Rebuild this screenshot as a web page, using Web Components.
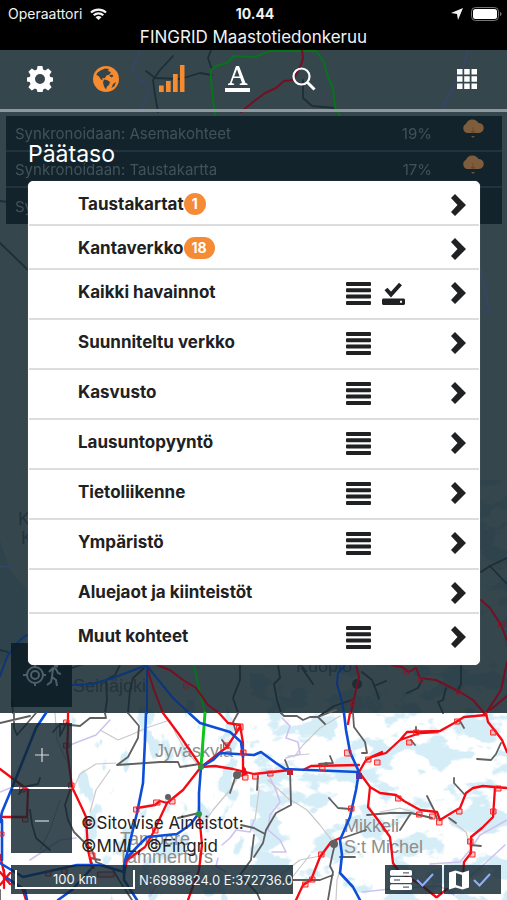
<!DOCTYPE html>
<html lang="fi">
<head>
<meta charset="utf-8">
<meta name="viewport" content="width=device-width, initial-scale=1">
<title>FINGRID Maastotiedonkeruu</title>
<style>
  body {
    margin: 0;
    background: #fff;
    font-family: Inter, "Liberation Sans", sans-serif;
  }
</style>
</head>
<body>
<field-app></field-app>

<script>
// Every component clones its template into an open shadow root.
function define(name, html, setup) {
  const template = document.createElement('template');
  template.innerHTML = html;
  customElements.define(name, class extends HTMLElement {
    constructor() {
      super();
      this.attachShadow({ mode: 'open' });
      this.shadowRoot.appendChild(template.content.cloneNode(true));
    }
    connectedCallback() {
      if (setup) setup(this, this.shadowRoot);
    }
  });
}

const ICONS = {
  gear: ['0 0 26 26', '<path fill="currentColor" fill-rule="evenodd" d="M10.6 0h4.8l.7 3.6 2 .9 3.1-2.1 3.4 3.4-2.1 3.1.8 2 3.7.7v3.8l-3.7.7-.8 2 2.1 3.1-3.4 3.4-3.1-2.1-2 .9-.7 3.6h-4.8l-.7-3.6-2-.9-3.1 2.1-3.4-3.4 2.1-3.1-.8-2L0 15.4v-3.800l2.700-.7.8-2-2.100-3.100 3.400-3.400 3.100 2.100 2-.9zM13 8a5 5 0 1 0 0 10 5 5 0 0 0 0-10z"/>'],
  globe: ['0 0 26 26', '<circle cx="13" cy="13" r="13" fill="currentColor"/><path fill="#32444c" d="M7.500 4.500 12 2.500l4 .5-1 2 3 1-1.500 2.500-3 1-1.500 2.500-3 .5 1 2-2-1-2.500-3.500-2-1 .5-2zM11 13.500l3 .5 3 2-1 3-2 1.500-1 3-2-3-1-4zM16 9.500l3-1 1.500 1.500-2 1.500zM20 18l3-2-1.500 4-3 2z"/>'],
  bars: ['0 0 26 27', '<path fill="currentColor" d="M0 20.500h4.700V27H0zM7 16h4.700v11H7zM14 9h4.700v18H14zM21 0h4.500v27H21z"/>'],
  font: ['0 0 26 27', '<path fill="currentColor" d="M0 23h25v4H0zM11 1h3l6.500 17 2 .8V20h-7.800v-1.200l2.300-.7-1.800-5.100H8.500l-1.800 5.100 2.400.7V20H3v-1.200l1.900-.8zM12 4.200 9.200 11.600h5.400z"/>'],
  search: ['0 0 24 24', '<circle cx="9.500" cy="9.500" r="8" fill="none" stroke="currentColor" stroke-width="2.200"/><path d="m15.500 15.500 7 7" stroke="currentColor" stroke-width="3"/>'],
  grid: ['0 0 20 20', '<path fill="currentColor" d="M0 0h5.500v5.500H0zM7.200 0h5.500v5.500H7.200zM14.500 0H20v5.500h-5.500zM0 7.200h5.500v5.500H0zM7.200 7.200h5.500v5.500H7.200zM14.500 7.200H20v5.500h-5.500zM0 14.500h5.500V20H0zM7.200 14.500h5.500V20H7.200zM14.500 14.500H20V20h-5.500z"/>'],
  list: ['0 0 26 23', '<g fill="currentColor"><rect x="1" width="25" height="4" rx="1"/><rect x="1" y="6.300" width="25" height="4" rx="1"/><rect x="1" y="12.600" width="25" height="4" rx="1"/><rect x="1" y="19" width="25" height="4" rx="1"/></g>'],
  saved: ['0 0 23 23', '<path fill="none" stroke="currentColor" stroke-width="4" d="m4 7 5 5.500L18.500 2"/><path fill="currentColor" fill-rule="evenodd" d="M1 16.500h21l1 1V22l-1 1H1l-1-1v-4.500zM18 18.700v2h2v-2z"/>'],
  chevron: ['0 0 15 22', '<path fill="currentColor" d="m0 4 4-4 11 11L4 22l-4-4 6.500-7z"/>'],
  cloud: ['0 0 22 20', '<path fill="#835e3c" d="M5 14a5 5 0 0 1-1-9.300A7 7 0 0 1 16.500 4 5 5 0 0 1 17 14z"/><path fill="#6b4c35" d="M10.500 8h1v4h2L11 14.500 8.500 12h2z"/><path fill="#6d5240" d="M9 17h4L11 19z"/>'],
  locate: ['0 0 38 24', '<g fill="none" stroke="currentColor" stroke-width="2"><circle cx="12" cy="12" r="8"/><circle cx="12" cy="12" r="4"/><path d="M12 1v4M12 19v4M0 12h4M20 12h3M26 9l4-4 3 1 2 4 3 1M30 6l-1 8 4 3 1 6M29 14l-1 5-4 3"/></g><circle cx="33" cy="2.500" r="2.300" fill="currentColor"/>'],
  server: ['0 0 22 20', '<g fill="#fff"><rect width="22" height="5.800" rx="1.500"/><rect y="7.100" width="22" height="5.800" rx="1.500"/><rect y="14.200" width="22" height="5.800" rx="1.500"/></g><path stroke="#32444c" d="M13 2.900h6M4 10h6M13 17.100h6"/>'],
  map: ['0 0 20 20', '<path fill="#fff" fill-rule="evenodd" d="m0 2.500 6.500-2 7 2 6.500-2v17l-6.500 2-7-2-6.500 2zM7 3v12l6 2V5z"/>'],
  tick: ['0 0 18 14', '<path fill="none" stroke="#8fb0ff" stroke-width="2" d="m1 7 5.500 5.500L17 1"/>'],
  plus: ['0 0 14 14', '<path stroke="currentColor" stroke-width="1.200" d="M7 0v14M0 7h14"/>'],
  minus: ['0 0 14 14', '<path stroke="currentColor" stroke-width="1.200" d="M0 7h14"/>'],
  wifi: ['0 0 17 12', '<g fill="none" stroke="currentColor" stroke-width="2.200"><path d="M1 4.500a11 11 0 0 1 15 0M3.700 7.300a7 7 0 0 1 9.600 0"/></g><path fill="currentColor" d="M5.500 9.300a4.400 4.400 0 0 1 6 0L8.500 12z"/>'],
  arrow: ['0 0 12 12', '<path fill="currentColor" d="M12 0 7 12 6 6 0 5z"/>'],
  battery: ['0 0 31 14', '<rect x=".5" y=".5" width="27" height="13" rx="4" fill="none" stroke="#777"/><rect x="2" y="2" width="24" height="10" rx="2.500" fill="#fff"/><path fill="#777" d="M29 5c2 .5 2 3.500 0 4z"/>'],
};

define('ui-icon', `
  <style>
    :host { display: block; flex: none; }
    svg { display: block; }
  </style>
  <svg aria-hidden="true"></svg>
`, (host, root) => {
  const [box, shape] = ICONS[host.getAttribute('name')];
  const [, , width, height] = box.split(' ');
  const svg = root.querySelector('svg');
  svg.setAttribute('viewBox', box);
  svg.setAttribute('width', width);
  svg.setAttribute('height', height);
  svg.innerHTML = shape;
});

define('status-bar', `
  <style>
    :host {
      display: block;
      position: relative;
      z-index: 3;
      height: 50px;
      background: #000;
      color: #f2f2f2;
      text-align: center;
    }
    .system {
      display: grid;
      grid-template-columns: 1fr auto 1fr;
      align-items: center;
      height: 27px;
      padding: 0 5px 0 8px;
      font-size: 14px;
    }
    .side { display: flex; align-items: center; gap: 8px; }
    .right { justify-content: flex-end; }
    h1 { margin: 0; font-size: 17px; line-height: 20px; font-weight: 400; }
  </style>
  <div class="system">
    <span class="side">Operaattori <ui-icon name="wifi"></ui-icon></span>
    <b>10.44</b>
    <span class="side right"><ui-icon name="arrow"></ui-icon><ui-icon name="battery"></ui-icon></span>
  </div>
  <h1><slot></slot></h1>
`);

define('tool-bar', `
  <style>
    :host {
      display: flex;
      height: 59px;
      padding: 0 7px;
      border-bottom: 3px solid #8d999e;
      color: #fff;
    }
    button {
      display: grid;
      place-items: center;
      width: 66px;
      padding: 0 0 2px;
      border: 0;
      background: none;
      color: inherit;
    }
    .on { color: #f68b2f; }
    .last { margin-left: auto; }
  </style>
  <button aria-label="Asetukset"><ui-icon name="gear"></ui-icon></button>
  <button class="on" aria-label="Kartta"><ui-icon name="globe"></ui-icon></button>
  <button class="on" aria-label="Signaali"><ui-icon name="bars"></ui-icon></button>
  <button aria-label="Tekstit"><ui-icon name="font"></ui-icon></button>
  <button aria-label="Haku"><ui-icon name="search"></ui-icon></button>
  <button class="last" aria-label="Valikko"><ui-icon name="grid"></ui-icon></button>
`);

define('sync-row', `
  <style>
    :host {
      display: flex;
      align-items: center;
      box-sizing: border-box;
      height: 36px;
      padding: 0 18px 0 9px;
      border-bottom: 2px solid #20343d;
      color: #43535a;
      font-size: 15px;
    }
    :host(:last-child) { border: 0; }
    :host(:not([percent])) ui-icon { display: none; }
    .name { flex: 1; }
    ui-icon { margin: 0 0 8px 30px; }
  </style>
  <span class="name"><slot></slot></span>
  <span class="percent"></span>
  <ui-icon name="cloud"></ui-icon>
`, (host, root) => {
  root.querySelector('.percent').textContent = host.getAttribute('percent') || '';
});

define('menu-row', `
  <style>
    :host {
      display: flex;
      align-items: flex-start;
      box-sizing: border-box;
      height: 44px;
      padding: 10px 13px 0 49px;
      border-bottom: 2px solid #dcdddd;
      color: #202122;
    }
    :host([tools]) { height: 50px; }
    :host(:last-child) { border: 0; }
    button {
      display: block;
      padding: 2px 0 0;
      border: 0;
      background: none;
      color: inherit;
      font: inherit;
    }
    .name {
      display: flex;
      flex: 1;
      align-items: center;
      padding: 0;
      font-size: 17px;
      font-weight: 700;
      line-height: 24px;
      text-align: left;
    }
    .badge {
      padding: 0 8px;
      border-radius: 12px;
      background: #f58b34;
      color: #fff;
      font-size: 14px;
      line-height: 22px;
    }
    .badge:empty { display: none; }
    .tools { display: flex; gap: 11px; width: 106px; }
  </style>
  <button class="name"><slot></slot><span class="badge"></span></button>
  <div class="tools"></div>
  <button aria-label="Avaa"><ui-icon name="chevron"></ui-icon></button>
`, (host, root) => {
  root.querySelector('.badge').textContent = host.getAttribute('count') || '';
  const tools = (host.getAttribute('tools') || '').split(' ').filter(Boolean);
  root.querySelector('.tools').innerHTML = tools.map(tool =>
    `<button aria-label="${tool === 'list' ? 'Luettelo' : 'Tallennettu'}"><ui-icon name="${tool}"></ui-icon></button>`
  ).join('');
});

define('level-menu', `
  <style>
    :host { display: block; }
    h2 { margin: 0 0 13px; color: #fff; font-size: 23px; font-weight: 400; line-height: 28px; }
    nav {
      border: 1px solid #fff;
      border-radius: 5px;
      background: #fff;
      box-shadow: 0 0 1px #7c888e;
    }
  </style>
  <h2>Päätaso</h2>
  <nav><slot></slot></nav>
`);

define('map-button', `
  <style>
    :host { display: block; width: 61px; height: 64px; }
    button {
      display: grid;
      place-items: center;
      width: 100%;
      height: 100%;
      padding: 0;
      border: 0;
      background: rgba(17, 37, 46, .82);
      color: #d5dadc;
    }
    :host([covered]) button { background: rgba(10, 27, 36, .86); color: #4d5f68; }
  </style>
  <button></button>
`, (host, root) => {
  const icon = document.createElement('ui-icon');
  icon.setAttribute('name', host.getAttribute('icon'));
  const button = root.querySelector('button');
  button.setAttribute('aria-label', host.getAttribute('label'));
  button.replaceChildren(icon);
});

define('map-footer', `
  <style>
    :host { display: flex; align-items: flex-start; justify-content: space-between; color: #f4f5f5; font-size: 13px; }
    .box { display: flex; align-items: center; height: 29px; background: rgba(17, 37, 46, .82); }
    .scale {
      box-sizing: border-box;
      width: 120px;
      height: 19px;
      margin: 0 4px;
      border: 2px solid #fff;
      border-top: 0;
      line-height: 18px;
      text-align: center;
    }
    .states { display: flex; gap: 2px; }
    .state { gap: 4px; width: 52px; padding-left: 5px; }
  </style>
  <div class="box">
    <span class="scale">100 km</span>
    <span>N:6989824.0 E:372736.0</span>
  </div>
  <div class="states">
    <span class="box state"><ui-icon name="server"></ui-icon><ui-icon name="tick"></ui-icon></span>
    <span class="box state"><ui-icon name="map"></ui-icon><ui-icon name="tick"></ui-icon></span>
  </div>
`);

const LAYER_STYLE = `
  <style>
    :host { position: absolute; inset: 0; overflow: hidden; pointer-events: none; }
    svg { display: block; width: 100%; height: 100%; }
    path { fill: none; stroke-linejoin: round; stroke-linecap: round; }
    text { font: 18px "Liberation Sans", sans-serif; fill: #8e8e8e; }
    .minor { stroke: #c9c9c9; stroke-width: 1.2; }
    .lilac { stroke: #cfc3ee; stroke-width: 1.6; }
    .road { stroke: #606060; stroke-width: 1.8; }
    .blue { stroke: #0d4ed8; stroke-width: 2.6; }
    .red { stroke: #f50a14; stroke-width: 2.3; }
    .green { stroke: #0fc41c; stroke-width: 3; }
    .station { fill: #ff000033; stroke: #f22; stroke-width: 1; }
    .shaded .road { stroke: #1d2e37; }
    .shaded .blue { stroke: #0c357b; stroke-width: 2; }
    .shaded .red { stroke: #750f22; stroke-width: 2; }
    .shaded .green { stroke: #08721d; stroke-width: 2; }
    .shaded .lilac { stroke: #38456a; }
    .shaded .station { fill: none; stroke: #85182b; }
  </style>`;

// Lakes, borders, minor roads and place names: lie under the shade.
define('map-base', `${LAYER_STYLE}
  <svg viewBox="0 0 507 900" preserveAspectRatio="xMidYMin slice" aria-hidden="true">
    <defs>
      <filter id="lakes" x="0" y="0" width="100%" height="100%" color-interpolation-filters="sRGB">
        <feTurbulence type="fractalNoise" baseFrequency=".028 .042" numOctaves="4" seed="11"/>
        <feColorMatrix values="0 0 0 0 .83  0 0 0 0 .93  0 0 0 0 .97  14 0 0 0 -7.200"/>
      </filter>
      <filter id="ponds" x="0" y="0" width="100%" height="100%" color-interpolation-filters="sRGB">
        <feTurbulence type="fractalNoise" baseFrequency=".05 .03" numOctaves="4" seed="4"/>
        <feColorMatrix values="0 0 0 0 .83  0 0 0 0 .93  0 0 0 0 .97  14 0 0 0 -8.400"/>
      </filter>
    </defs>
    <rect width="507" height="900" fill="#fff"/>
    <path style="fill:#cdeaf5" d="M0 540 10 570 27 590V640L0 665z"/>
    <rect x="250" y="480" width="257" height="420" filter="url(#lakes)"/>
    <rect x="70" y="700" width="180" height="200" filter="url(#ponds)"/>
    <g class="minor">
      <path d="M72 792 80 774 96 764 116 763M100 730 118 740 133 734 146 728 170 720 176 734 184 748 199 766"/>
      <path d="M206 820 213 810 230 790 243 770M296 803 307 810 320 825 333 842M268 780 290 800 296 803"/>
      <path d="M294 757 303 745 320 728 340 716M288 756 309 754M380 812 400 808 413 812M450 820 466 832 471 850"/>
      <path d="M255 820 259 790 257 780M340 870 337 880 336 900M310 855 290 880M260 890 300 860 320 856"/>
      <path d="M55 713 57 740 66 760M60 800 50 830 40 850M110 770 96 790 90 812"/>
    </g>
    <g class="lilac">
      <path d="M0 792 20 784 30 790M70 745 96 735 110 720M30 860 60 840 76 838"/>
      <path d="M282 718 290 726 286 738 298 742 300 754 286 758M266 770 276 790 280 802 270 815 268 830 280 840 286 852 272 852"/>
      <path d="M222 845 230 838 236 830 250 832 254 820M218 858 216 866 226 872M507 820 480 835 470 850 460 862 430 864M505 845 480 868 466 880M362 892 400 888 440 886 454 895M150 896 162 876 190 872"/>
    </g>
    <text x="155" y="757">Jyväskylä</text>
    <text x="120" y="845">Tampere</text>
    <text x="118" y="863">Tammerfors</text>
    <text x="344" y="832">Mikkeli</text>
    <text x="344" y="853">S:t Michel</text>
    <text x="73" y="692">Seinäjoki</text>
    <text x="296" y="672">Kuopio</text>
    <text x="18" y="525">Kokkola</text>
    <text x="21" y="544">Karleby</text>
  </svg>
`);

// Power network: keeps its colours, muted where the menu shade lies.
define('map-network', `${LAYER_STYLE}
  <svg viewBox="0 0 507 900" preserveAspectRatio="xMidYMin slice" aria-hidden="true">
    <g class="shaded">
      <path class="road" d="M173 56 160 70 153 80 155 95 158 112M146 71 155 78 180 79 200 73 212 75M211 50 208 58 212 70M303 80 303 98 312 106 335 108M0 201 8 202M0 243 28 270M0 650 8 652M481 572 490 566 507 558M490 566 507 584"/>
      <path class="lilac" d="M140 50 132 70 150 90 140 112M468 50 463 68 452 90 440 112M481 270 489 310 484 313M0 567 12 566"/>
      <path class="road" d="M120 665 115 675 106 680 107 700 105 713M144 668 133 678 130 690 128 713M72 668 84 664M278 665 280 678 274 684 277 700 281 713M240 665 240 680 233 698 238 713M362 672 372 680 376 690 379 699M374 686 386 681M461 665 461 684 457 692M422 680 418 688 407 693M446 688 443 700 438 702 443 713M302 668 313 684M352 700 334 706 318 717M12 700 13 713"/>
      <circle cx="357" cy="684" r="5" fill="#1d2e37"/>
      <path class="green" d="M215 116 211 80 211 70 216 66 227 63 234 56 254 57 270 51 316 51 324 62 328 77 333 88 335 107 340 116M194 665 200 693 205 713"/>
      <path class="red" d="M302 50 303 58 301 65 293 80 284 81 276 88 265 93 253 102 241 112M147 668 154 690 163 713M157 665 170 670 183 680 196 688 208 705 219 713M391 665 402 667 409 672 416 668 420 678 436 680 460 692 473 700 484 713M481 600 490 608 501 625 507 640M507 662 501 690 486 713M507 696 490 710M356 665 359 677 353 703 351 713"/>
      <path class="blue" d="M27 635 20 640 8 655 4 665 0 676M72 685 92 684 113 678 147 665V713M147 666 173 698 189 713M345 665 338 673 337 684 342 702 344 713"/>
      <path class="station" d="M405 670h4v4h-4zM419 678h4v4h-4zM457 690h4v4h-4zM499 622h5v5h-5zM351 701h4v4h-4zM184 684h4v4h-4z"/>
    </g>
    <path class="road" d="M0 723 30 716M14 713 14 728 17 735 36 713M53 732 60 724 80 726 90 718 106 718 105 713M128 713 139 726 138 738 128 757 117 765 160 762 178 762 180 767 200 764 201 767M60 726 60 736 67 722M40 778 38 784 24 787 19 794M30 810 32 824 36 838 50 850M70 790 65 805 68 820 74 832 92 850 96 862 112 868 119 880 132 900M94 868 90 858 100 860"/>
    <path class="road" d="M238 713 233 722 236 732M222 740 228 748M230 793 236 775 245 769M178 818 199 813M281 713 284 716 297 716 303 720 310 717 318 717 325 724M318 717 336 710M353 713 354 727 365 742 367 753 362 753M416 727 416 732M411 740 415 745M460 721 464 728M501 743 496 754 491 760 477 759M454 778 454 783 465 795M427 796 434 810 437 819M367 815 390 813 411 813 400 830M411 813 432 818M449 818 456 823M329 798 338 808 350 809M290 770 291 805 276 813 266 830 263 843 254 857M254 828 265 834M241 825 254 828M336 840 333 852 330 866 333 872 331 882 328 900M340 857 355 857M289 880 320 880 333 875M258 776 257 790M285 760 289 770M330 756 333 763 319 764M343 838 366 830M471 845 481 846M254 835 251 860 240 875 257 893 260 900M0 890V900"/>
    <path class="green" d="M205 713 203 740 201 767"/>
    <path class="red" d="M68 713V730L67 750 72 787 82 808 86 817 88 850 92 868M163 713 178 733 200 765M219 713 228 723 240 725 243 743 243 773M240 727 227 747 201 767 215 766 233 769 254 774 290 770M303 770 311 766 359 765M201 767 183 790 167 803 160 801 155 805 137 808M167 803 153 833 145 847 127 860 124 875M199 813 202 845 199 870 188 900M0 769 28 790 27 817 0 817M0 855 5 877 22 888 26 900"/>
    <path class="red" d="M350 713 348 724M359 772 366 760 372 757 386 753 400 740 407 732 440 731 456 722 464 717 486 715M371 757 382 752M400 740 420 733 438 732M486 713 488 722 496 732 502 740 507 752M359 772 370 787 380 793 396 795 404 801 420 810 437 812 440 820 453 812 460 808 466 793 473 788 483 786 507 788M370 787 368 807 378 820 390 837 393 863 400 873 420 884 436 897M495 788 493 817 482 828 471 837 471 853 464 862 463 876M340 838 331 842 320 857 311 880 303 885 296 900M437 897 447 889"/>
    <path class="red" d="M0 872 10 884M0 885 10 873M4 870V888"/>
    <path class="blue" d="M46 713 36 728 12 788 2 812 0 822M2 820V860M146 713 145 740 143 783 137 813 128 850 124 865V880L137 900M189 713 200 723 230 732 241 742 243 757M201 767 213 760 220 753 254 755 261 752 276 763 285 769 358 772M201 767 199 793 199 813 190 825 177 834 147 837 137 847 125 860M0 863 23 877 77 865 100 865 124 872M7 878 25 890 27 900M90 870 72 890 58 900M344 713 346 730 350 752 359 772 356 790 350 817 340 840 342 855 340 873 353 887 360 900"/>
    <path class="station" d="M64 720h5v5h-5zM64 743h5v5h-5zM69 783h5v5h-5zM85 820h5v5h-5zM90 853h5v5h-5zM20 787h5v5h-5zM23 817h5v5h-5zM0 832h4v4h-4zM134 807h5v5h-5zM154 800h6v5h-6zM170 799h5v5h-5zM153 828h5v5h-5zM224 743h5v5h-5zM237 724h6v6h-6zM241 750h5v5h-5zM243 775h5v5h-5zM253 774h5v5h-5zM268 771h5v5h-5zM320 766h5v5h-5zM345 750h6v6h-6zM349 806h5v5h-5zM366 757h5v5h-5zM375 760h5v5h-5zM407 740h5v5h-5zM414 730h5v5h-5zM455 719h5v5h-5zM491 730h5v5h-5zM396 796h5v5h-5zM417 812h5v5h-5zM430 814h5v5h-5zM437 820h5v5h-5zM457 809h5v5h-5zM491 809h5v5h-5zM496 786h5v5h-5zM470 852h5v5h-5zM468 839h5v5h-5zM319 852h5v5h-5zM310 877h5v5h-5zM303 882h5v5h-5zM46 871h5v5h-5zM62 869h5v5h-5zM98 872h16v5h-16z"/>
    <circle cx="237" cy="775" r="4" fill="#606060"/><circle cx="168" cy="797" r="3" fill="#606060"/>
    <circle cx="334" cy="844" r="4" fill="#606060"/><circle cx="326" cy="764" r="2" fill="#606060"/>
    <path style="fill:#f50a14" d="m243 764 5 10-7 3z"/>
    <rect x="287" y="769" width="6" height="6" fill="#c42232"/><rect x="356" y="773" width="6" height="6" fill="#5634a4"/>
    <circle cx="201" cy="767" r="3" fill="#299a43"/><circle cx="199" cy="814" r="3" fill="#299a43"/>
  </svg>
`);

define('field-app', `
  <style>
    :host { display: block; position: relative; min-height: 100vh; overflow: hidden; }
    .shade { position: relative; background: rgba(16, 34, 43, .84); }
    .over { position: relative; z-index: 2; }
    map-network { z-index: 1; }
    .stack { display: grid; }
    .stack > * { grid-area: 1 / 1; }
    .sync { align-self: start; margin: 4px 5px 0 6px; background: #11222b; opacity: .95; }
    level-menu { z-index: 2; margin: 28px 27px 48px 28px; }
    .locate { position: absolute; z-index: 1; bottom: 6px; left: 11px; }
    .open { padding: 10px 6px 0 11px; }
    .zoom { display: grid; grid-template-columns: 61px 1fr; gap: 2px 9px; align-items: start; }
    .zoom map-button:first-child { grid-column: 1 / 3; }
    .credits { margin: 0; padding-top: 23px; color: #222; font-size: 17px; line-height: 23px; }
    map-footer { margin: 7px 0 6px; }
  </style>
  <map-base></map-base>
  <status-bar>FINGRID Maastotiedonkeruu</status-bar>
  <div class="shade">
    <div class="over">
      <tool-bar></tool-bar>
      <div class="stack">
        <div class="sync">
          <sync-row percent="19%">Synkronoidaan: Asemakohteet</sync-row>
          <sync-row percent="17%">Synkronoidaan: Taustakartta</sync-row>
          <sync-row>Synkronoidaan</sync-row>
        </div>
        <level-menu>
          <menu-row count="1">Taustakartat</menu-row>
          <menu-row count="18">Kantaverkko</menu-row>
          <menu-row tools="list saved">Kaikki havainnot</menu-row>
          <menu-row tools="list">Suunniteltu verkko</menu-row>
          <menu-row tools="list">Kasvusto</menu-row>
          <menu-row tools="list">Lausuntopyyntö</menu-row>
          <menu-row tools="list">Tietoliikenne</menu-row>
          <menu-row tools="list">Ympäristö</menu-row>
          <menu-row>Aluejaot ja kiinteistöt</menu-row>
          <menu-row tools="list">Muut kohteet</menu-row>
        </level-menu>
      </div>
      <map-button class="locate" covered icon="locate" label="Oma sijainti"></map-button>
    </div>
  </div>
  <map-network></map-network>
  <div class="open over">
    <div class="zoom">
      <map-button icon="plus" label="Lähennä"></map-button>
      <map-button icon="minus" label="Loitonna"></map-button>
      <p class="credits">©Sitowise Aineistot:<br>©MML, ©Fingrid</p>
    </div>
    <map-footer></map-footer>
  </div>
`);
</script>
</body>
</html>
